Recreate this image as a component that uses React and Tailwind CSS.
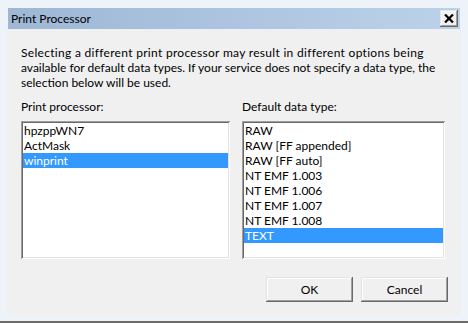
const processors = ['hpzppWN7', 'ActMask', 'winprint']
const dataTypes = [
  'RAW',
  'RAW [FF appended]',
  'RAW [FF auto]',
  'NT EMF 1.003',
  'NT EMF 1.006',
  'NT EMF 1.007',
  'NT EMF 1.008',
  'TEXT',
]

const raised =
  'shadow-[inset_-1px_-1px_#696969,inset_1px_1px_#e3e3e3,inset_-2px_-2px_#a0a0a0,inset_2px_2px_#ffffff]'
const sunken =
  'shadow-[inset_1px_1px_#a0a0a0,inset_-1px_-1px_#ffffff,inset_2px_2px_#696969,inset_-2px_-2px_#e3e3e3]'

function ListBox({ items, selected }) {
  return (
    <div className={`bg-white p-[2px] h-[138px] ${sunken}`}>
      <ul>
        {items.map((item) => (
          <li
            key={item}
            className={`h-[15px] leading-[15px] pl-[1px] whitespace-nowrap ${
              item === selected ? 'bg-[#3399ff] text-white' : 'text-black'
            }`}
          >
            {item}
          </li>
        ))}
      </ul>
    </div>
  )
}

function Button({ children }) {
  return (
    <button className={`w-[87px] h-[25px] bg-[#f0f0f0] text-black leading-none ${raised}`}>
      {children}
    </button>
  )
}

export default function App() {
  return (
    <div
      className="w-[468px] h-[323px] flex flex-col bg-[#eef3fa] pt-[8px] px-[7px] pb-[5px] border-b-2 border-[#6b6b6b] text-[12px] text-black"
      style={{ fontFamily: 'Lato, "Noto Sans", sans-serif' }}
    >
      <div className="h-[21px] mx-[1px] flex items-center justify-between pl-[3px] pr-[2px] bg-gradient-to-r from-[#9db7d5] to-[#bcd2ea]">
        <span>Print Processor</span>
        <button className={`w-[18px] h-[17px] bg-[#f0f0f0] flex items-center justify-center ${raised}`}>
          <svg width="10" height="9" viewBox="0 0 10 9">
            <path d="M1 0.5 L9 8.5 M9 0.5 L1 8.5" stroke="#000" strokeWidth="2.2" />
          </svg>
        </button>
      </div>

      <div className="flex-1 bg-[#f0f0f0] pl-[14px] pt-[16px]">
        <p className="leading-[15px] whitespace-nowrap">
          <span className="tracking-[0.3px]">
            Selecting a different print processor may result in different options being
          </span>
          <br />
          available for default data types. If your service does not specify a data type, the
          <br />
          selection below will be used.
        </p>

        <div className="mt-[9px] flex gap-[12px]">
          <div className="w-[209px]">
            <div className="leading-[15px] mb-[7px]">Print processor:</div>
            <ListBox items={processors} selected="winprint" />
          </div>
          <div className="w-[203px]">
            <div className="leading-[15px] mb-[7px]">Default data type:</div>
            <ListBox items={dataTypes} selected="TEXT" />
          </div>
        </div>

        <div className="mt-[18px] flex justify-end gap-[8px] pr-[13px]">
          <Button>OK</Button>
          <Button>Cancel</Button>
        </div>
      </div>
    </div>
  )
}
